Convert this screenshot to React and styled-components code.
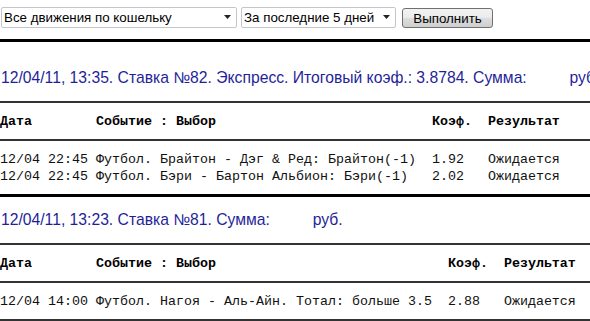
import React from "react";
import styled, { createGlobalStyle } from "styled-components";

const GlobalStyle = createGlobalStyle`
  html, body {
    margin: 0;
    padding: 0;
    background: #fff;
    overflow: hidden;
  }
  body {
    font-family: "Liberation Sans", Arial, sans-serif;
    color: #000;
  }
`;

const Page = styled.div`
  width: 590px;
  overflow: hidden;
`;

const Toolbar = styled.form`
  display: flex;
  align-items: flex-start;
  padding: 7px 0 0 1px;
  margin: 0 0 11px;
  height: 21px;
`;

const SelectWrap = styled.div`
  position: relative;
  width: ${(p) => p.$w}px;
  height: 21px;
  margin-right: ${(p) => p.$gap}px;
`;

const Select = styled.select`
  appearance: none;
  width: 100%;
  height: 21px;
  box-sizing: border-box;
  border: 1px solid #c3c7cc;
  border-radius: 2px;
  background: #fff;
  font-family: "Liberation Sans", Arial, sans-serif;
  font-size: 13.33px;
  color: #000;
  padding: 0 18px 0 2px;
  outline: none;
`;

const Arrow = styled.svg`
  position: absolute;
  right: 6px;
  top: 8px;
  pointer-events: none;
`;

const Button = styled.button`
  width: 91px;
  height: 20px;
  margin-top: 1px;
  box-sizing: border-box;
  border: 1px solid #707070;
  border-radius: 3px;
  background: linear-gradient(#f2f2f2 0%, #ebebeb 48%, #dddddd 52%, #cfcfcf 100%);
  font-family: "Liberation Sans", Arial, sans-serif;
  font-size: 13.33px;
  color: #000;
  padding: 0;
  line-height: 17px;
`;

const Rule = styled.div`
  height: ${(p) => (p.$thick ? 3 : 2)}px;
  background: ${(p) => (p.$thick ? "#000" : "#333")};
  width: 100%;
`;

const BetTitle = styled.div`
  font-family: "Liberation Sans", Arial, sans-serif;
  font-size: 15.7px;
  line-height: 18px;
  color: #1f1f99;
  white-space: nowrap;
  padding-left: 1px;
  margin: ${(p) => p.$top}px 0 ${(p) => p.$bottom}px;
`;

const Blank = styled.span`
  display: inline-block;
  width: 34px;
`;

const Pre = styled.pre`
  margin: 0;
  padding: 10px 0 9px;
  font-family: "Liberation Mono", "Courier New", monospace;
  font-size: 13.333px;
  line-height: 17px;
  font-weight: ${(p) => (p.$head ? 700 : 400)};
  white-space: pre;
  color: ${(p) => (p.$head ? "#000" : "#111")};
`;

const cols = (a, b, c, d, kCol, rCol) =>
  a.padEnd(12) + b.padEnd(kCol - 12) + c.padEnd(rCol - kCol) + d;

const bets = [
  {
    title: "12/04/11, 13:35. Ставка №82. Экспресс. Итоговый коэф.: 3.8784. Сумма:",
    top: 27,
    bottom: 14,
    k: 54,
    r: 61,
    rows: [
      ["12/04 22:45", "Футбол. Брайтон - Дэг & Ред: Брайтон(-1)", "1.92", "Ожидается"],
      ["12/04 22:45", "Футбол. Бэри - Бартон Альбион: Бэри(-1)", "2.02", "Ожидается"],
    ],
  },
  {
    title: "12/04/11, 13:23. Ставка №81. Сумма:",
    top: 14,
    bottom: 14,
    k: 56,
    r: 63,
    rows: [
      ["12/04 14:00", "Футбол. Нагоя - Аль-Айн. Тотал: больше 3.5", "2.88", "Ожидается"],
    ],
  },
];

function Bet({ bet, last }) {
  return (
    <>
      <BetTitle $top={bet.top} $bottom={bet.bottom}>
        {bet.title} <Blank /> руб.
      </BetTitle>
      <Rule />
      <Pre $head>{cols("Дата", "Событие : Выбор", "Коэф.", "Результат", bet.k, bet.r)}</Pre>
      <Rule />
      <Pre>
        {bet.rows.map((r) => cols(r[0], r[1], r[2], r[3], bet.k, bet.r)).join("\n")}
      </Pre>
      <Rule $thick={!last} />
    </>
  );
}

function DropArrow() {
  return (
    <Arrow width="7" height="4" viewBox="0 0 7 4">
      <path d="M0 0h7L3.5 4z" fill="#222" />
    </Arrow>
  );
}

export default function App() {
  return (
    <Page>
      <GlobalStyle />
      <Toolbar>
        <SelectWrap $w={236} $gap={4}>
          <Select defaultValue="all">
            <option value="all">Все движения по кошельку</option>
          </Select>
          <DropArrow />
        </SelectWrap>
        <SelectWrap $w={155} $gap={6}>
          <Select defaultValue="5">
            <option value="5">За последние 5 дней</option>
          </Select>
          <DropArrow />
        </SelectWrap>
        <Button type="button">Выполнить</Button>
      </Toolbar>
      <Rule $thick />
      {bets.map((b, i) => (
        <Bet key={i} bet={b} last={i === bets.length - 1} />
      ))}
    </Page>
  );
}
